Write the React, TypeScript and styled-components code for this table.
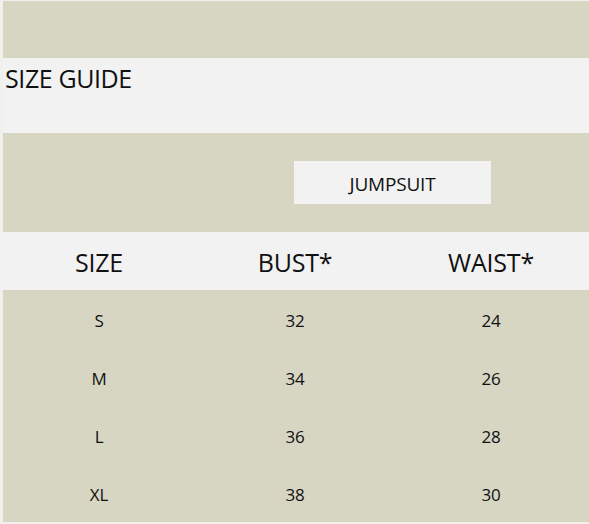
import React from "react";
import styled, { createGlobalStyle } from "styled-components";

const Global = createGlobalStyle`
  html, body { margin: 0; padding: 0; background: #f0f0ec; }
  body { font-family: "Open Sans", "Noto Sans", sans-serif; color: #111; }
`;

const Page = styled.div`
  width: 586px;
  margin: 1px 0 0 3px;
  display: flex;
  flex-direction: column;
  background: #d7d6c3;
`;

const Spacer = styled.div<{ h: number }>`
  height: ${(p) => p.h}px;
`;

const TitleBand = styled.div`
  height: 75px;
  background: #f2f2f2;
  padding: 4px 0 0 2px;
  box-sizing: border-box;
`;

const Title = styled.h1`
  margin: 0;
  font-family: "Open Sans", sans-serif;
  font-weight: 400;
  font-size: 25px;
  letter-spacing: -0.4px;
  line-height: 32px;
`;

const BadgeBand = styled.div`
  height: 99px;
  display: flex;
  align-items: flex-start;
  padding: 28px 0 0 291px;
  box-sizing: border-box;
`;

const Badge = styled.div`
  width: 197px;
  height: 43px;
  padding-top: 2px;
  box-sizing: border-box;
  background: #f2f2f2;
  display: flex;
  align-items: center;
  justify-content: center;
  font-size: 19px;
  letter-spacing: -0.2px;
`;

const Row = styled.div<{ header?: boolean }>`
  display: grid;
  grid-template-columns: 196px 196px 196px;
  margin-left: -2px;
  height: 58px;
  padding-top: 2px;
  box-sizing: border-box;
  align-items: center;
  background: ${(p) => (p.header ? "#f2f2f2" : "transparent")};
  font-size: ${(p) => (p.header ? "25px" : "17px")};
  letter-spacing: ${(p) => (p.header ? "-0.2px" : "-0.2px")};
`;

const Cell = styled.div`
  text-align: center;
`;

const rows = [
  ["S", "32", "24"],
  ["M", "34", "26"],
  ["L", "36", "28"],
  ["XL", "38", "30"],
];

export default function App() {
  return (
    <>
      <Global />
      <Page>
        <Spacer h={57} />
        <TitleBand>
          <Title>SIZE GUIDE</Title>
        </TitleBand>
        <BadgeBand>
          <Badge>JUMPSUIT</Badge>
        </BadgeBand>
        <Row header>
          <Cell>SIZE</Cell>
          <Cell>BUST*</Cell>
          <Cell>WAIST*</Cell>
        </Row>
        {rows.map((r) => (
          <Row key={r[0]}>
            {r.map((c, i) => (
              <Cell key={i}>{c}</Cell>
            ))}
          </Row>
        ))}
      </Page>
    </>
  );
}
